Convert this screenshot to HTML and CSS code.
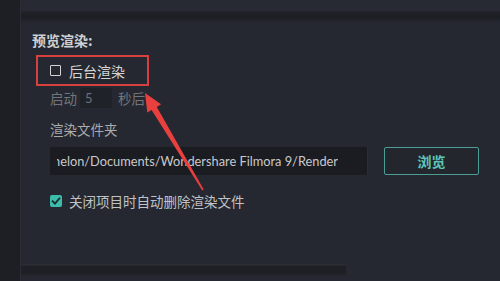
FILE: index.html
```html
<!DOCTYPE html>
<html lang="zh-CN">
<head>
<meta charset="utf-8">
<title>预览渲染</title>
<link rel="stylesheet" href="styles.css">
</head>
<body>
<div class="frame">
  <div class="top-strip"></div>
  <div class="top-shadow"></div>
  <section class="panel">
    <div class="title">预览渲染:</div>
    <div class="bgrow">
      <span class="cb"></span>
      <span class="bgtext">后台渲染</span>
    </div>
    <div class="startrow">
      <span>启动</span>
      <span class="numbox">5</span>
      <span class="after">秒后</span>
    </div>
    <div class="label">渲染文件夹</div>
    <div class="pathrow">
      <div class="pathbox"><span class="pathtext">nelon/Documents/Wondershare Filmora 9/Render</span></div>
      <div class="btn">浏览</div>
    </div>
    <div class="checkrow">
      <span class="cb checked"><svg width="12" height="12" viewBox="0 0 12 12"><path d="M2.6 6.2 L5 8.6 L9.4 3.4" fill="none" stroke="#1c2a2a" stroke-width="1.8" stroke-linecap="square"/></svg></span>
      <span class="checktext">关闭项目时自动删除渲染文件</span>
    </div>
  </section>
  <div class="bottom">
    <div class="bottom-gap"></div>
    <div class="bottom-rest"></div>
  </div>
</div>
<svg class="arrow" width="500" height="281" viewBox="0 0 500 281">
  <polygon points="145,93 161.1,104.3 156.8,106.9 203.7,189.6 202.3,190.4 151.6,110 147.3,112.5" fill="#e8403e"/>
</svg>
</body>
</html>
```

FILE: styles.css
```css
html, body {
  margin: 0;
  padding: 0;
}
body {
  width: 500px;
  height: 281px;
  overflow: hidden;
  background: #1d1f25;
  position: relative;
  font-family: "Noto Sans CJK SC", "Noto Sans", sans-serif;
}
.frame {
  margin-left: 20px;
  height: 281px;
  background: #252830;
  border-left: 1px solid #2a2d35;
  box-sizing: border-box;
}
.top-strip {
  height: 11px;
  background: #272a32;
}
.top-shadow {
  height: 11px;
  background: linear-gradient(#21232a, #1c1e24 50%, #23262d);
}
.panel {
  height: 242px;
  box-sizing: border-box;
  padding: 10px 0 0 29px;
  display: flex;
  flex-direction: column;
  align-items: flex-start;
}
.title {
  margin-left: -18px;
  font-size: 14px;
  line-height: 16px;
  font-weight: 700;
  color: #cfd0d3;
}
.bgrow {
  margin-top: 7px;
  margin-left: -14px;
  width: 113px;
  height: 31px;
  box-sizing: border-box;
  border: 2px solid #d8403f;
  display: flex;
  align-items: center;
  padding-left: 12px;
  gap: 8px;
}
.cb {
  width: 11px;
  height: 11px;
  box-sizing: border-box;
  border: 1.5px solid #d2d3d5;
  border-radius: 1px;
  flex: none;
}
.bgtext {
  font-size: 14px;
  line-height: 16px;
  color: #d3d4d6;
}
.startrow {
  margin-top: 2px;
  height: 20px;
  display: flex;
  align-items: center;
  font-size: 13.5px;
  color: #72757b;
}
.numbox {
  margin-left: 3px;
  width: 32px;
  height: 20px;
  box-sizing: border-box;
  padding-left: 5px;
  background: #1f2228;
  font-family: "Lato", "Noto Sans", sans-serif;
  font-size: 13px;
  line-height: 20px;
  color: #6c6f75;
}
.after {
  margin-left: 6px;
}
.label {
  margin-top: 13px;
  font-size: 13.5px;
  line-height: 16px;
  color: #a9abaf;
}
.pathrow {
  margin-top: 10px;
  height: 28px;
  display: flex;
}
.pathbox {
  width: 318px;
  height: 28px;
  box-sizing: border-box;
  background: #1a1c21;
  border-right: 1px solid #2b2e35;
  padding-left: 7px;
  display: flex;
  align-items: center;
}
.pathtext {
  display: block;
  overflow: hidden;
  white-space: nowrap;
  text-indent: -4px;
  font-family: "Lato", "Noto Sans", sans-serif;
  font-size: 12.8px;
  color: #c8c9cc;
}
.btn {
  margin-left: 16px;
  width: 95px;
  height: 28px;
  box-sizing: border-box;
  border: 1px solid #4b9d96;
  border-radius: 2px;
  background: #23262d;
  color: #5cc7bb;
  font-size: 14px;
  font-weight: 700;
  display: flex;
  align-items: center;
  justify-content: center;
}
.checkrow {
  margin-top: 18px;
  height: 16px;
  display: flex;
  align-items: center;
  gap: 7px;
}
.cb.checked {
  width: 12px;
  height: 12px;
  border: none;
  border-radius: 2px;
  background: #3cbcab;
  display: flex;
}
.checktext {
  font-size: 13.5px;
  line-height: 16px;
  color: #c0c2c6;
}
.bottom {
  display: flex;
  height: 12px;
}
.bottom-gap {
  width: 325px;
  background: linear-gradient(#2a2d34 0, #2a2d34 1px, #1f2127 2px, #1d1f25 70%, #23262c);
}
.bottom-rest {
  flex: 1;
}
.arrow {
  position: absolute;
  left: 0;
  top: 0;
  pointer-events: none;
}
```
